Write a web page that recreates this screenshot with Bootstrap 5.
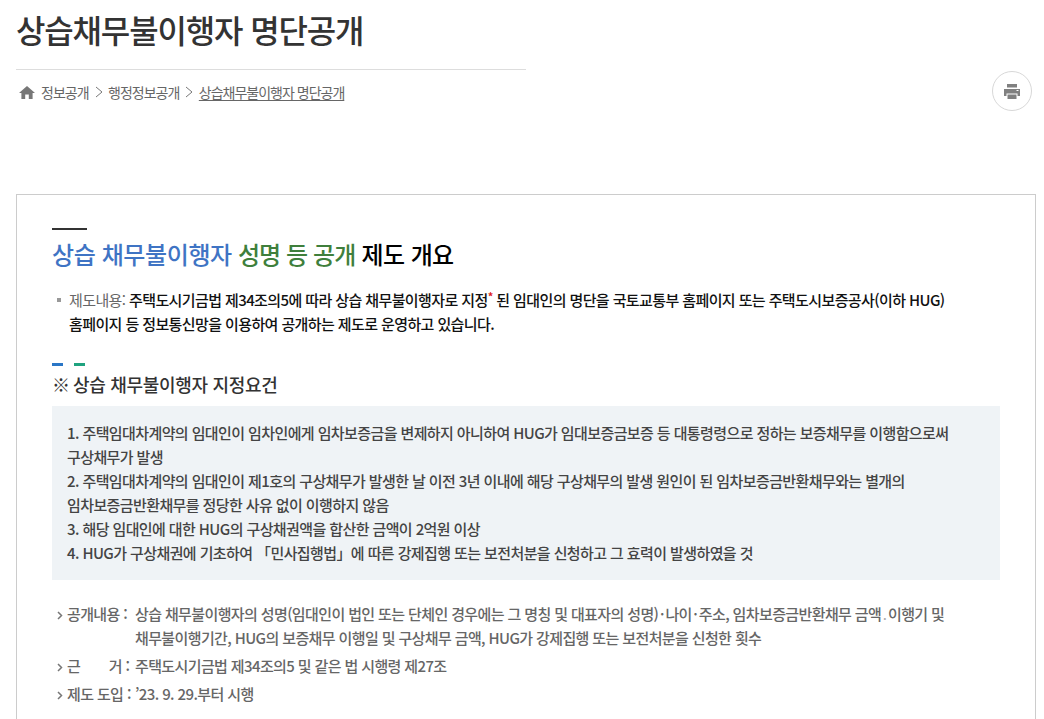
<!DOCTYPE html>
<html lang="ko">
<head>
    <meta charset="UTF-8">
    <meta name="viewport" content="width=device-width, initial-scale=1.0">
    <link rel="stylesheet" href="https://cdn.jsdelivr.net/npm/bootstrap@5.3.3/dist/css/bootstrap.min.css">
    <title>상습채무불이행자 명단공개</title>
    <style>
        html, body { height: 719px; overflow: hidden; }
        body {
            font-family: "Noto Sans CJK KR", "Noto Sans", sans-serif;
            color: #555;
            font-size: 15px;
            letter-spacing: -0.6px;
        }
        .page-wrap { padding: 0 8px 0 16px; }
        .page-title {
            font-size: 32px;
            font-weight: 500;
            color: #333;
            line-height: 46px;
            padding-top: 6px;
            height: 69px;
            margin: 0;
            letter-spacing: -1.15px;
        }
        .title-rule { width: 510px; border-top: 1px solid #ddd; }
        .crumb-row { height: 124px; padding-top: 1px; }
        .crumb-list { padding: 10px 0 0 3px; font-size: 14px; letter-spacing: -1px; color: #666; line-height: 22px; }
        .crumb-list .crumb-now { text-decoration: underline; text-underline-offset: 2px; }
        .crumb-sep { margin: 0 5.5px 0 6px; }
        .home-icon { margin-right: 6px; }
        .print-btn {
            width: 40px; height: 40px; border: 1px solid #d8d8d8; border-radius: 50%;
            margin-right: 4px; background: #fff;
        }
        .info-box { border: 1px solid #ccc; padding: 33px 35px 0; height: 600px; }
        .rule-dark { width: 35px; height: 2px; background: #333; }
        .box-title {
            font-size: 24px; font-weight: 500; line-height: 36px; margin: 6px 0 0; color: #000;
            letter-spacing: -0.6px;
        }
        .t-blue { color: #3f74c4; letter-spacing: -0.4px; }
        .t-green { color: #3f7f3c; letter-spacing: -0.9px; }
        .intro-list { margin: 16px 0 0; padding: 0 0 0 17px; line-height: 24px; color: #111; position: relative; font-weight: 500; }
        .intro-list::before {
            content: ""; position: absolute; left: 5px; top: 10px; width: 4px; height: 4px; background: #999;
        }
        .intro-label { color: #666; font-weight: 400; }
        .note-star { color: #d22; font-size: 11px; font-weight: 700; vertical-align: 5px; line-height: 0; }
        .tick-row { margin-top: 27px; gap: 11px; }
        .tick-row span { width: 11px; height: 3px; }
        .tick-blue { background: #2a76c6; }
        .tick-green { background: #1fa37f; }
        .sub-title { font-size: 18px; font-weight: 500; color: #333; line-height: 26px; margin: 5px 0 0; letter-spacing: -0.32px; }
        .sub-mark { letter-spacing: -1.5px; margin-right: 1px; }
        .req-panel { background: #eff3f6; margin-top: 9px; padding: 15px 15px 0; height: 174px; line-height: 24px; color: #444; font-weight: 500; }
        .detail-list { margin-top: 22px; padding-left: 5px; color: #666; font-weight: 500; letter-spacing: -0.62px; }
        .detail-row { line-height: 24px; margin-bottom: 4px; }
        .detail-arrow { width: 10px; flex: none; }
        .detail-label { flex: none; width: 68px; white-space: pre; }
        .gap-char { width: 25px; display: inline-block; }
        .mid-dot { margin: 0 1.6px; }
        .thin-dot { margin: 0 1.6px; color: #aaa; font-weight: 400; }
    </style>
</head>
<body>
    <div class="page-wrap">
        <h1 class="page-title">상습채무불이행자 명단공개</h1>
        <div class="title-rule"></div>
        <div class="crumb-row d-flex justify-content-between align-items-start">
            <div class="crumb-list d-flex align-items-center">
                <svg class="home-icon" width="16" height="13" viewBox="0 0 16 13"><path d="M8 0 0 7h2.400v6h3.800V8.600h3.600V13h3.800V7H16z" fill="#777"/></svg>
                <span>정보공개</span>
                <svg class="crumb-sep" width="8" height="12" viewBox="0 0 8 12"><path d="M1 1l6 5-6 5" fill="none" stroke="#777"/></svg>
                <span>행정정보공개</span>
                <svg class="crumb-sep" width="8" height="12" viewBox="0 0 8 12"><path d="M1 1l6 5-6 5" fill="none" stroke="#777"/></svg>
                <span class="crumb-now">상습채무불이행자 명단공개</span>
            </div>
            <button class="print-btn d-flex align-items-center justify-content-center p-0" type="button" aria-label="인쇄">
                <svg width="16" height="15" viewBox="0 0 16 15"><path d="M3 0h10v3.500H3zM0 5h16v7h-2.500V9.500h-11V12H0zM3.500 10.500h9V15h-9z" fill="#808080"/><rect x="12.500" y="6" width="2" height="1" fill="#fff"/></svg>
            </button>
        </div>
        <div class="info-box">
            <div class="rule-dark"></div>
            <h2 class="box-title"><span class="t-blue">상습 채무불이행자</span> <span class="t-green">성명 등 공개</span> 제도 개요</h2>
            <p class="intro-list"><span class="intro-label">제도내용:</span> 주택도시기금법 제34조의5에 따라 상습 채무불이행자로 지정<span class="note-star">*</span> 된 임대인의 명단을 국토교통부 홈페이지 또는 주택도시보증공사(이하 HUG)<br>홈페이지 등 정보통신망을 이용하여 공개하는 제도로 운영하고 있습니다.</p>
            <div class="tick-row d-flex"><span class="tick-blue"></span><span class="tick-green"></span></div>
            <h3 class="sub-title"><span class="sub-mark">※ </span>상습 채무불이행자 지정요건</h3>
            <div class="req-panel">
                1. 주택임대차계약의 임대인이 임차인에게 임차보증금을 변제하지 아니하여 HUG가 임대보증금보증 등 대통령령으로 정하는 보증채무를 이행함으로써<br>
                구상채무가 발생<br>
                2. 주택임대차계약의 임대인이 제1호의 구상채무가 발생한 날 이전 3년 이내에 해당 구상채무의 발생 원인이 된 임차보증금반환채무와는 별개의<br>
                임차보증금반환채무를 정당한 사유 없이 이행하지 않음<br>
                3. 해당 임대인에 대한 HUG의 구상채권액을 합산한 금액이 2억원 이상<br>
                4. HUG가 구상채권에 기초하여 「민사집행법」에 따른 강제집행 또는 보전처분을 신청하고 그 효력이 발생하였을 것
            </div>
            <div class="detail-list">
                <div class="detail-row d-flex">
                    <span class="detail-arrow"><svg width="6" height="9" viewBox="0 0 6 9"><path d="M1 1l3.500 3.500L1 8" fill="none" stroke="#777" stroke-width="1.500"/></svg></span>
                    <span class="detail-label">공개내용 :</span>
                    <span>상습 채무불이행자의 성명(임대인이 법인 또는 단체인 경우에는 그 명칭 및 대표자의 성명)<span class="mid-dot">·</span>나이<span class="mid-dot">·</span>주소, 임차보증금반환채무 금액<span class="thin-dot">.</span>이행기 및<br>채무불이행기간, HUG의 보증채무 이행일 및 구상채무 금액, HUG가 강제집행 또는 보전처분을 신청한 횟수</span>
                </div>
                <div class="detail-row d-flex">
                    <span class="detail-arrow"><svg width="6" height="9" viewBox="0 0 6 9"><path d="M1 1l3.500 3.500L1 8" fill="none" stroke="#777" stroke-width="1.500"/></svg></span>
                    <span class="detail-label">근<span class="gap-char"></span> 거 :</span>
                    <span>주택도시기금법 제34조의5 및 같은 법 시행령 제27조</span>
                </div>
                <div class="detail-row d-flex">
                    <span class="detail-arrow"><svg width="6" height="9" viewBox="0 0 6 9"><path d="M1 1l3.500 3.500L1 8" fill="none" stroke="#777" stroke-width="1.500"/></svg></span>
                    <span class="detail-label">제도 도입 :</span>
                    <span>’23. 9. 29.부터 시행</span>
                </div>
            </div>
        </div>
    </div>
</body>
</html>
